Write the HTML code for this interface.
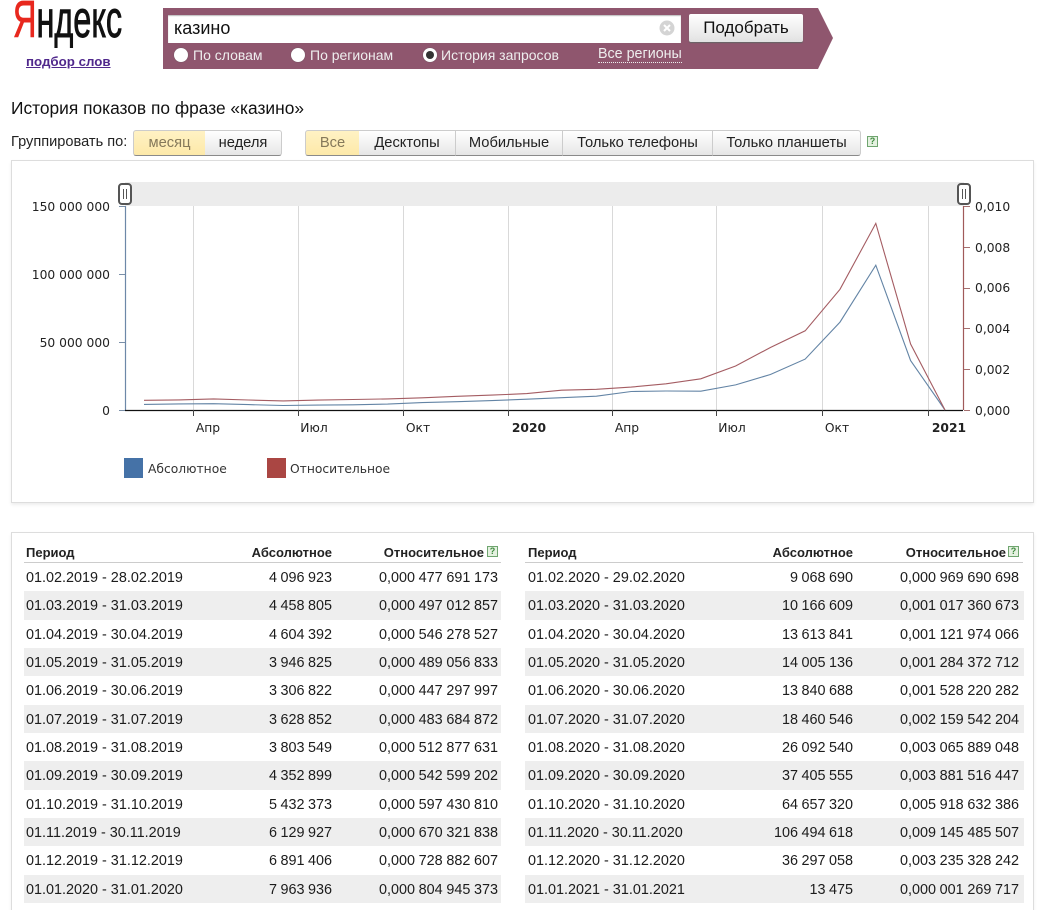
<!DOCTYPE html>
<html><head><meta charset="utf-8"><style>
html,body{margin:0;padding:0;background:#fff;overflow:hidden;height:910px}
body{width:1044px;font-family:"Liberation Sans",sans-serif;color:#222}
#w{position:relative;width:1044px;height:910px;overflow:hidden}
.a{position:absolute;white-space:nowrap}
.rl{color:#eee;font-size:14px;top:47px;line-height:17px}
.radio{position:absolute;width:14px;height:14px;border-radius:50%;background:#fff;top:48px;box-shadow:0 0 1px #555}
.btn{position:absolute;top:130px;height:24px;line-height:24px;text-align:center;font-size:14.7px;background:linear-gradient(#fff,#e6e6e6);border:1px solid #ccc;border-bottom:1px solid #8a8a8a;box-sizing:content-box;color:#222}
.on{background:linear-gradient(#fff2c4,#fde9a9);color:#85795a}
.help{position:absolute;width:9px;height:9px;border:1px solid #6fa56f;background:#e4f1e0;color:#3e8a3e;font-size:9px;line-height:9px;text-align:center;font-weight:bold}
.panel{position:absolute;left:11px;width:1021px;border:1px solid #ddd;box-shadow:0 2px 3px #eee;background:#fff}
.tb{position:absolute;top:563px;font-size:14.4px;color:#1c1c1c}
.r{height:28.33px;line-height:28.33px;position:relative}
.r:nth-child(even){background:#eee}
.r span{position:absolute;top:1px;white-space:nowrap}
.p{left:2px}
.v{word-spacing:-.5px}
.w{word-spacing:-.35px}
.h{position:absolute;top:545px;font-size:13px;font-weight:bold;line-height:15px;color:#222;white-space:nowrap}
svg text{font-family:"DejaVu Sans",sans-serif;font-size:12.3px;fill:#222}
</style></head><body><div id="w">

<div class="a" style="left:13px;top:-5px;font-size:52px;line-height:50px;transform:scaleX(.624);transform-origin:0 0;color:#111;-webkit-text-stroke:.9px #111"><span style="color:#e8281e;-webkit-text-stroke:.9px #e8281e">Я</span>ндекс</div>
<div class="a" style="left:26px;top:54px;font-size:13.3px;line-height:16px;font-weight:bold;color:#50288c;text-decoration:underline">подбор слов</div>

<svg class="a" style="left:163px;top:8px" width="672" height="62"><polygon points="0,0 655,0 670,30 655,61 0,61" fill="#8f566e"/></svg>
<div class="a" style="left:168px;top:15px;width:513px;height:28px;background:#fff;box-shadow:inset 0 1px 1px #bbb"></div>
<div class="a" style="left:174px;top:18px;font-size:18px;line-height:21px;color:#111">казино</div>
<svg class="a" style="left:659px;top:20px" width="16" height="16"><circle cx="8" cy="8" r="7.5" fill="#d4d4d4"/><path d="M5 5l6 6M11 5l-6 6" stroke="#fff" stroke-width="2"/></svg>
<div class="a" style="left:689px;top:14px;width:114px;height:28px;line-height:27px;text-align:center;font-size:17px;color:#111;background:linear-gradient(#fff,#e2e2e2);border-radius:2px;box-shadow:0 1px 1px #666">Подобрать</div>
<div class="radio" style="left:174px"></div><div class="a rl" style="left:193px">По словам</div>
<div class="radio" style="left:291px"></div><div class="a rl" style="left:310px">По регионам</div>
<div class="radio" style="left:423px"></div><div class="a" style="left:426px;top:51px;width:8px;height:8px;border-radius:50%;background:#333"></div><div class="a rl" style="left:441px">История запросов</div>
<div class="a rl" style="left:598px;top:46px;border-bottom:1px dotted #eee;line-height:16px;font-size:14.3px">Все регионы</div>

<div class="a" style="left:11px;top:99px;font-size:17.35px;line-height:19px;color:#111">История показов по фразе «казино»</div>
<div class="a" style="left:11px;top:134px;font-size:14.6px;line-height:16px;color:#222">Группировать по:</div>

<div class="btn on" style="left:133px;width:71px;border-radius:3px 0 0 3px">месяц</div>
<div class="btn" style="left:205px;width:76px;border-radius:0 3px 3px 0;border-left:0">неделя</div>
<div class="btn on" style="left:305px;width:53px;border-radius:3px 0 0 3px">Все</div>
<div class="btn" style="left:359px;width:96px;border-left:0">Десктопы</div>
<div class="btn" style="left:456px;width:106px;border-left:0">Мобильные</div>
<div class="btn" style="left:563px;width:149px;border-left:0">Только телефоны</div>
<div class="btn" style="left:713px;width:147px;border-left:0;border-radius:0 3px 3px 0">Только планшеты</div>
<div class="help" style="left:867px;top:136px">?</div>

<div class="panel" style="top:160px;height:341px"></div>
<svg class="a" style="left:0;top:160px" width="1044" height="340" viewBox="0 160 1044 340">
<rect x="125" y="182" width="839" height="24" fill="#ececec"/>
<g stroke="#d9d9d9" stroke-width="1"><path d="M193.5 206V410M298.5 206V410M403.5 206V410M508.5 206V410M612.5 206V410M716.5 206V410M822.5 206V410M928.5 206V410"/></g>
<path d="M125.5 206V410" stroke="#6d88a8" stroke-width="1.2" fill="none"/>
<path d="M963.5 206V410" stroke="#a05a5a" stroke-width="1.2" fill="none"/>
<path d="M119 206.5h6M119 274.5h6M119 342.5h6M119 410.5h6" stroke="#7a8fa8"/>
<path d="M964 206.5h6M964 247.5h6M964 288.5h6M964 328.5h6M964 369.5h6M964 410.5h6" stroke="#a57070"/>
<path d="M125 410.5H963" stroke="#111" stroke-width="1.2"/>
<path d="M193.5 410v6M298.5 410v6M403.5 410v6M508.5 410v6M612.5 410v6M716.5 410v6M822.5 410v6M928.5 410v6" stroke="#444"/>
<polyline fill="none" stroke="#6384a5" stroke-width="1.1" points="144,404.4 178.8,403.9 213.6,403.7 248.4,404.6 283.2,405.5 318,405.1 352.8,404.8 387.6,404.1 422.4,402.6 457.2,401.7 492,400.6 526.8,399.2 561.6,397.7 596.4,396.2 631.2,391.5 666,391 700.8,391.2 735.6,384.9 770.4,374.5 805.2,359.1 840,322.1 875.8,265.2 910.6,360.6 945,410"/>
<polyline fill="none" stroke="#a45c62" stroke-width="1.1" points="144,400.3 178.8,399.9 213.6,398.9 248.4,400 283.2,400.9 318,400.1 352.8,399.5 387.6,398.9 422.4,397.8 457.2,396.3 492,395.1 526.8,393.6 561.6,390.2 596.4,389.3 631.2,387.1 666,383.8 700.8,378.8 735.6,366 770.4,347.5 805.2,330.8 840,289.3 875.8,223.4 910.6,344 945,410"/>
<g fill="#fff" stroke="#555" stroke-width="2"><rect x="119" y="184" width="12" height="20" rx="3"/><rect x="958" y="184" width="12" height="20" rx="3"/></g>
<path d="M123.5 189v10M126.5 189v10M962.5 189v10M965.5 189v10" stroke="#555"/>
<g text-anchor="end"><text x="110" y="211">150 000 000</text><text x="110" y="279">100 000 000</text><text x="110" y="347">50 000 000</text><text x="110" y="415">0</text></g>
<text x="975" y="211">0,010</text><text x="975" y="252">0,008</text><text x="975" y="292">0,006</text><text x="975" y="333">0,004</text><text x="975" y="374">0,002</text><text x="975" y="415">0,000</text>
<g text-anchor="middle"><text x="208" y="432">Апр</text><text x="314" y="432">Июл</text><text x="418" y="432">Окт</text><text x="529" y="432" style="font-weight:bold">2020</text><text x="627" y="432">Апр</text><text x="732" y="432">Июл</text><text x="837" y="432">Окт</text><text x="949" y="432" style="font-weight:bold">2021</text></g>
<rect x="124" y="458" width="19" height="20" fill="#4572a7"/><text x="148" y="473" style="fill:#333">Абсолютное</text>
<rect x="267" y="458" width="19" height="20" fill="#aa4643"/><text x="290" y="473" style="fill:#333">Относительное</text>
</svg>

<div class="panel" style="top:532px;height:400px"></div>
<div class="h" style="left:26px">Период</div>
<div class="h" style="right:712px">Абсолютное</div>
<div class="h" style="right:560px">Относительное</div>
<div class="help" style="left:487px;top:546px">?</div>
<div class="a" style="left:24px;top:562px;width:477px;height:1px;background:#ccc"></div>
<div class="h" style="left:528px">Период</div>
<div class="h" style="right:191px">Абсолютное</div>
<div class="h" style="right:38px">Относительное</div>
<div class="help" style="left:1008px;top:546px">?</div>
<div class="a" style="left:525px;top:562px;width:498px;height:1px;background:#ccc"></div>

<div class="tb" style="left:24px;width:477px">
<div class="r"><span class="p">01.02.2019 - 28.02.2019</span><span class="v" style="right:169px">4 096 923</span><span class="w" style="right:3px">0,000 477 691 173</span></div>
<div class="r"><span class="p">01.03.2019 - 31.03.2019</span><span class="v" style="right:169px">4 458 805</span><span class="w" style="right:3px">0,000 497 012 857</span></div>
<div class="r"><span class="p">01.04.2019 - 30.04.2019</span><span class="v" style="right:169px">4 604 392</span><span class="w" style="right:3px">0,000 546 278 527</span></div>
<div class="r"><span class="p">01.05.2019 - 31.05.2019</span><span class="v" style="right:169px">3 946 825</span><span class="w" style="right:3px">0,000 489 056 833</span></div>
<div class="r"><span class="p">01.06.2019 - 30.06.2019</span><span class="v" style="right:169px">3 306 822</span><span class="w" style="right:3px">0,000 447 297 997</span></div>
<div class="r"><span class="p">01.07.2019 - 31.07.2019</span><span class="v" style="right:169px">3 628 852</span><span class="w" style="right:3px">0,000 483 684 872</span></div>
<div class="r"><span class="p">01.08.2019 - 31.08.2019</span><span class="v" style="right:169px">3 803 549</span><span class="w" style="right:3px">0,000 512 877 631</span></div>
<div class="r"><span class="p">01.09.2019 - 30.09.2019</span><span class="v" style="right:169px">4 352 899</span><span class="w" style="right:3px">0,000 542 599 202</span></div>
<div class="r"><span class="p">01.10.2019 - 31.10.2019</span><span class="v" style="right:169px">5 432 373</span><span class="w" style="right:3px">0,000 597 430 810</span></div>
<div class="r"><span class="p">01.11.2019 - 30.11.2019</span><span class="v" style="right:169px">6 129 927</span><span class="w" style="right:3px">0,000 670 321 838</span></div>
<div class="r"><span class="p">01.12.2019 - 31.12.2019</span><span class="v" style="right:169px">6 891 406</span><span class="w" style="right:3px">0,000 728 882 607</span></div>
<div class="r"><span class="p">01.01.2020 - 31.01.2020</span><span class="v" style="right:169px">7 963 936</span><span class="w" style="right:3px">0,000 804 945 373</span></div>
</div>

<div class="tb" style="left:525px;width:499px">
<div class="r"><span class="p" style="left:3px">01.02.2020 - 29.02.2020</span><span class="v" style="right:171px">9 068 690</span><span class="w" style="right:5px">0,000 969 690 698</span></div>
<div class="r"><span class="p" style="left:3px">01.03.2020 - 31.03.2020</span><span class="v" style="right:171px">10 166 609</span><span class="w" style="right:5px">0,001 017 360 673</span></div>
<div class="r"><span class="p" style="left:3px">01.04.2020 - 30.04.2020</span><span class="v" style="right:171px">13 613 841</span><span class="w" style="right:5px">0,001 121 974 066</span></div>
<div class="r"><span class="p" style="left:3px">01.05.2020 - 31.05.2020</span><span class="v" style="right:171px">14 005 136</span><span class="w" style="right:5px">0,001 284 372 712</span></div>
<div class="r"><span class="p" style="left:3px">01.06.2020 - 30.06.2020</span><span class="v" style="right:171px">13 840 688</span><span class="w" style="right:5px">0,001 528 220 282</span></div>
<div class="r"><span class="p" style="left:3px">01.07.2020 - 31.07.2020</span><span class="v" style="right:171px">18 460 546</span><span class="w" style="right:5px">0,002 159 542 204</span></div>
<div class="r"><span class="p" style="left:3px">01.08.2020 - 31.08.2020</span><span class="v" style="right:171px">26 092 540</span><span class="w" style="right:5px">0,003 065 889 048</span></div>
<div class="r"><span class="p" style="left:3px">01.09.2020 - 30.09.2020</span><span class="v" style="right:171px">37 405 555</span><span class="w" style="right:5px">0,003 881 516 447</span></div>
<div class="r"><span class="p" style="left:3px">01.10.2020 - 31.10.2020</span><span class="v" style="right:171px">64 657 320</span><span class="w" style="right:5px">0,005 918 632 386</span></div>
<div class="r"><span class="p" style="left:3px">01.11.2020 - 30.11.2020</span><span class="v" style="right:171px">106 494 618</span><span class="w" style="right:5px">0,009 145 485 507</span></div>
<div class="r"><span class="p" style="left:3px">01.12.2020 - 31.12.2020</span><span class="v" style="right:171px">36 297 058</span><span class="w" style="right:5px">0,003 235 328 242</span></div>
<div class="r"><span class="p" style="left:3px">01.01.2021 - 31.01.2021</span><span class="v" style="right:171px">13 475</span><span class="w" style="right:5px">0,000 001 269 717</span></div>
</div>
</div></body></html>
